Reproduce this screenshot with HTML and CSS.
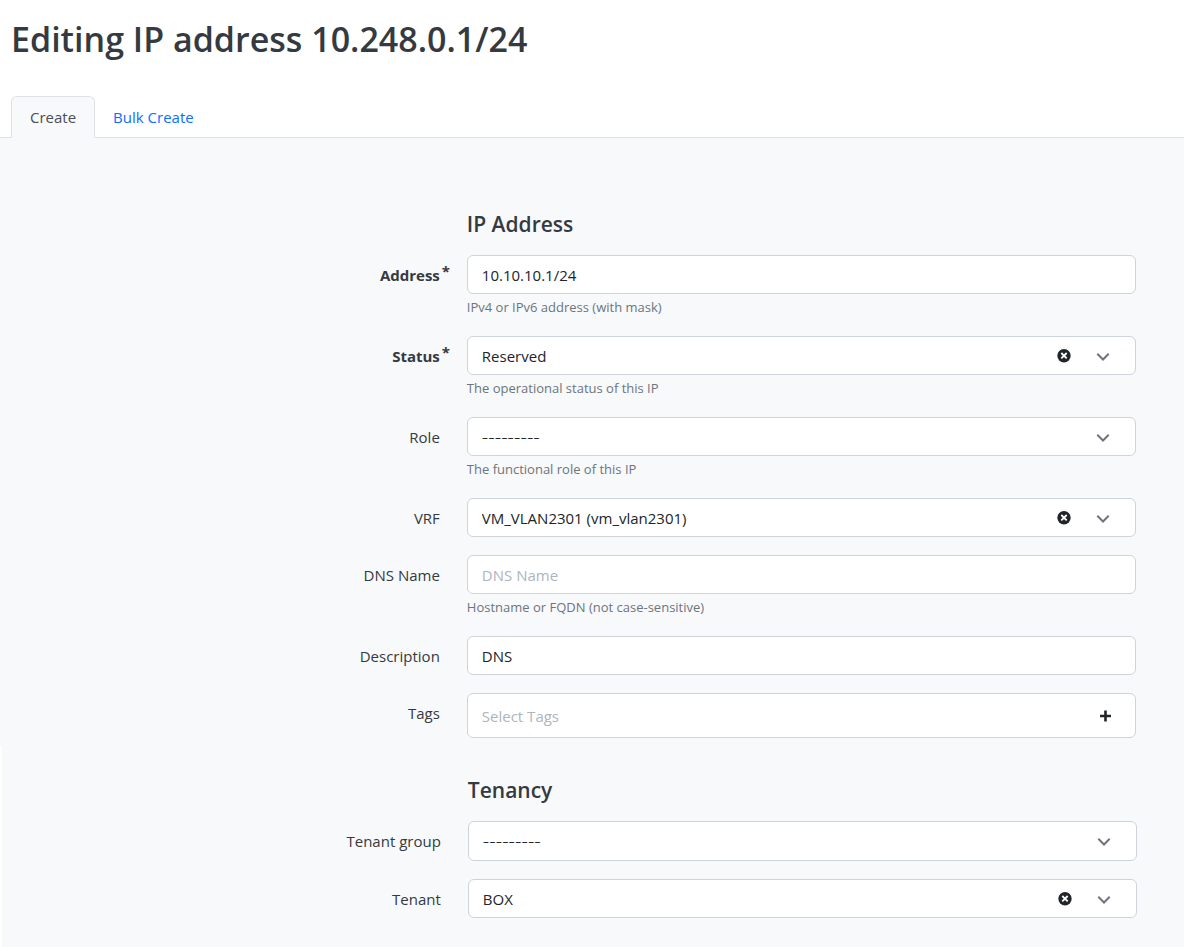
FILE: index.html
```html
<!DOCTYPE html>
<html lang="en">
<head>
<meta charset="utf-8">
<title>Editing IP address 10.248.0.1/24</title>
<link rel="stylesheet" href="styles.css">
</head>
<body>
<svg class="sprite" aria-hidden="true">
  <symbol id="i-chevron" viewBox="0 0 14 14"><path d="M1.300 4.800 7 10.500l5.700-5.700" fill="none" stroke="#6c757d" stroke-width="2"/></symbol>
  <symbol id="i-clear" viewBox="0 0 14 14"><circle cx="7" cy="6.700" r="6.700" fill="#212529"/><path d="m4.300 4 5.400 5.400m0-5.400-5.400 5.400" fill="none" stroke="#fff" stroke-width="1.800"/></symbol>
  <symbol id="i-plus" viewBox="0 0 14 14"><path d="M7.500 1.500v11M2 7h11" fill="none" stroke="#212529" stroke-width="2.600"/></symbol>
</svg>
<header class="page-header">
  <h1 class="page-title">Editing IP address 10.248.0.1/24</h1>
  <nav class="tabs">
    <a class="tab tab-active" href="#create">Create</a>
    <a class="tab" href="#bulk">Bulk Create</a>
  </nav>
</header>
<main class="panel">
  <form>
    <section class="group">
      <h2 class="group-title">IP Address</h2>
      <div class="row">
        <label class="label required" for="address">Address</label>
        <div class="field">
          <input class="control" id="address" type="text" value="10.10.10.1/24">
          <p class="help">IPv4 or IPv6 address (with mask)</p>
        </div>
      </div>
      <div class="row">
        <label class="label required" for="status">Status</label>
        <div class="field">
          <div class="picker">
            <select class="control" id="status"><option>Reserved</option></select>
            <button class="clear" type="button" aria-label="Clear status"><svg class="icon"><use href="#i-clear"/></svg></button>
            <svg class="icon chevron" aria-hidden="true"><use href="#i-chevron"/></svg>
          </div>
          <p class="help">The operational status of this IP</p>
        </div>
      </div>
      <div class="row">
        <label class="label" for="role">Role</label>
        <div class="field">
          <div class="picker">
            <select class="control control-empty" id="role"><option>---------</option></select>
            <svg class="icon chevron" aria-hidden="true"><use href="#i-chevron"/></svg>
          </div>
          <p class="help">The functional role of this IP</p>
        </div>
      </div>
      <div class="row">
        <label class="label" for="vrf">VRF</label>
        <div class="field">
          <div class="picker">
            <select class="control" id="vrf"><option>VM_VLAN2301 (vm_vlan2301)</option></select>
            <button class="clear" type="button" aria-label="Clear VRF"><svg class="icon"><use href="#i-clear"/></svg></button>
            <svg class="icon chevron" aria-hidden="true"><use href="#i-chevron"/></svg>
          </div>
        </div>
      </div>
      <div class="row">
        <label class="label" for="dns">DNS Name</label>
        <div class="field">
          <input class="control" id="dns" type="text" placeholder="DNS Name">
          <p class="help">Hostname or FQDN (not case-sensitive)</p>
        </div>
      </div>
      <div class="row">
        <label class="label" for="description">Description</label>
        <div class="field"><input class="control" id="description" type="text" value="DNS"></div>
      </div>
      <div class="row">
        <label class="label" for="tags">Tags</label>
        <div class="field">
          <div class="picker">
            <input class="control control-tall" id="tags" type="text" placeholder="Select Tags">
            <button class="add" type="button" aria-label="Add tag"><svg class="icon"><use href="#i-plus"/></svg></button>
          </div>
        </div>
      </div>
    </section>
    <section class="group group-tenancy">
      <h2 class="group-title">Tenancy</h2>
      <div class="row">
        <label class="label" for="tenant-group">Tenant group</label>
        <div class="field">
          <div class="picker">
            <select class="control control-empty control-group" id="tenant-group"><option>---------</option></select>
            <svg class="icon chevron" aria-hidden="true"><use href="#i-chevron"/></svg>
          </div>
        </div>
      </div>
      <div class="row">
        <label class="label" for="tenant">Tenant</label>
        <div class="field">
          <div class="picker">
            <select class="control" id="tenant"><option>BOX</option></select>
            <button class="clear" type="button" aria-label="Clear tenant"><svg class="icon"><use href="#i-clear"/></svg></button>
            <svg class="icon chevron" aria-hidden="true"><use href="#i-chevron"/></svg>
          </div>
        </div>
      </div>
    </section>
  </form>
</main>
</body>
</html>
```
FILE: styles.css
```css
* { box-sizing: border-box; }
body {
  margin: 0;
  min-height: 100vh;
  display: flex;
  flex-direction: column;
  background: #fff;
  color: #343a40;
  font: 15px/24px "Open Sans", "Noto Sans", sans-serif;
}
.sprite { position: absolute; width: 0; height: 0; }
.page-title {
  margin: 0;
  padding: 17px 11px 35px;
  font-size: 34px;
  line-height: 44px;
  font-weight: 600;
}
.tabs {
  display: flex;
  padding: 0 11px;
  border-bottom: 1px solid #dee2e6;
}
.tab {
  padding: 8px 17px;
  margin-bottom: -1px;
  border: 1px solid transparent;
  border-radius: 6px 6px 0 0;
  color: #0d6efd;
  text-decoration: none;
}
.tab-active {
  padding: 8px 18px;
  background: #f8f9fb;
  border-color: #dee2e6;
  border-bottom-color: #f8f9fb;
  color: #495057;
}
.panel { flex: 1; background: #f8f9fb; }
.group { padding: 72px 48px 9px 12px; }
.group-tenancy {
  padding: 29px 47px 29px 11px;
  border-left: 2px solid #fff;
}
.row, .group-title {
  display: grid;
  grid-template-columns: 39fr 61fr;
  column-gap: 27px;
}
.group-title {
  margin: 0 0 17px;
  font-size: 21px;
  line-height: 28px;
  font-weight: 600;
}
.group-title::before { content: ""; }
.row + .row { margin-top: 18px; }
.label {
  position: relative;
  justify-self: end;
  align-self: start;
  padding-top: 8px;
}
.required { font-weight: 700; }
.required::after {
  content: "*";
  position: absolute;
  left: calc(100% + 2px);
  top: 4px;
}
.field { min-width: 0; }
.control {
  display: block;
  width: 100%;
  height: 39px;
  padding: 0 14px;
  border: 1px solid #ced4da;
  border-radius: 6px;
  background: #fff;
  color: #212529;
  font: inherit;
  appearance: none;
}
.control::placeholder { color: #adb5bd; opacity: 1; }
.control-tall { height: 45px; }
.control-group { height: 40px; }
.control-empty { font-size: 20px; font-weight: 300; }
.help {
  margin: 3px 0 0;
  color: #6c757d;
  font-size: 13px;
  line-height: 21px;
}
.picker { position: relative; }
.icon { display: block; width: 14px; height: 14px; }
.chevron, .clear, .add {
  position: absolute;
  top: 0;
  bottom: 0;
  margin: auto 0;
}
.chevron { right: 26px; pointer-events: none; }
.clear, .add {
  height: 14px;
  padding: 0;
  border: 0;
  background: none;
}
.clear { right: 65px; }
.add { right: 24px; }
```
